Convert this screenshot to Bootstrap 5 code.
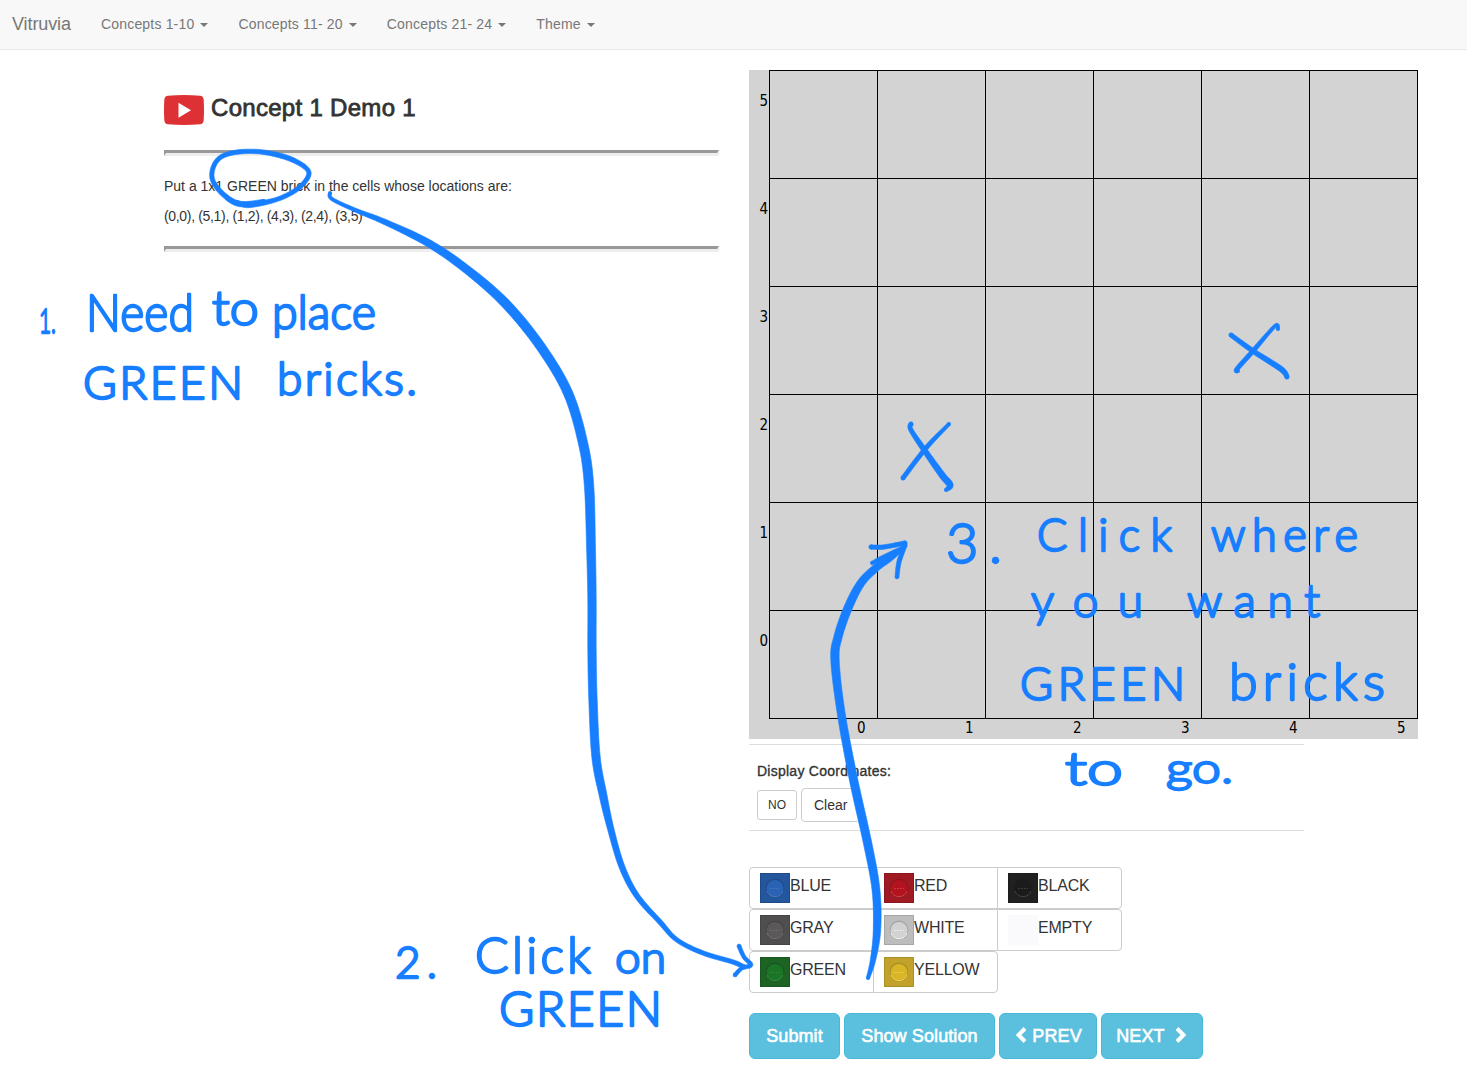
<!DOCTYPE html>
<html lang="en">
<head>
<meta charset="utf-8">
<title>Vitruvia</title>
<meta name="viewport" content="width=device-width, initial-scale=1">
<link href="https://cdn.jsdelivr.net/npm/bootstrap@5.3.0/dist/css/bootstrap.min.css" rel="stylesheet">
<style>
body{font-family:"Liberation Sans",Arial,sans-serif;font-size:14px;line-height:20px;color:#333;min-height:1074px;overflow:hidden}
.topbar{height:50px;background:#f8f8f8;border-bottom:1px solid #e7e7e7;padding:0 0 0 12px}
.topbar .navbar-brand{font-size:18px;line-height:20px;color:#777;width:59px;margin:0 30px 0 0;padding:0 0 2px;letter-spacing:-.1px}
.topbar .navbar-nav{gap:30px}
.topbar .nav-link{color:#777;padding:0 0 2px!important;line-height:20px;white-space:nowrap;letter-spacing:.18px}
.topbar .nav-link::after{border-width:4px 4px 0;margin-left:6px;vertical-align:2px}
.lesson{width:555px;margin-left:164px;padding-top:42px}
.lesson h3{font-size:24px;line-height:30px;margin:1px 0 0;-webkit-text-stroke:.8px #333;font-weight:400;letter-spacing:.3px}
.playicon{margin-right:7px}
.rule{height:6px;border:solid;border-width:3px 2px 3px 2px;border-color:#999 #eee #eee #999;opacity:1;margin:0}
.rule-top{margin-top:24px}
.rule-end{margin-top:20px}
.task{margin:20px 0 0}
.spots{margin:10px 0 0;letter-spacing:-.33px}
.work{width:669px;margin-left:30px;padding-top:20px}
.board{background:#d3d3d3;height:669px;display:grid;grid-template-columns:20px 649px;grid-template-rows:649px 20px;color:#000;font-family:"DejaVu Sans Condensed","DejaVu Sans",sans-serif;font-size:15px}
.cells{display:grid;grid-template-columns:repeat(6,108px);grid-template-rows:repeat(6,108px);border:solid #000;border-width:1px 0 0 1px}
.cells i{border:solid #000;border-width:0 1px 1px 0}
.ylab span{height:108px;padding-top:21px;text-align:right;padding-right:1px}
.xlab span{width:108px;padding-left:88px;line-height:19px}
.coords{width:555px;border:solid #ddd;border-width:1px 0;margin-top:5px;height:87px;padding:16px 8px 0}
.coords .lbl{-webkit-text-stroke:.35px #333;letter-spacing:.25px}
.coords .pair{gap:4px;margin-top:7px}
.btn-plain{background:#fff;border:1px solid #ccc;color:#333;font-size:14px;line-height:20px;padding:6px 12px;border-radius:4px}
.btn-plain.tiny{font-size:12px;line-height:18px;padding:5px 0;width:40px;border-radius:3px}
.bricks{margin-top:36px}
.bricks .btn{width:125px;height:42px;background:#fff;border:1px solid #ccc;color:#333;font-size:16px;line-height:22px;padding:5px 10px;border-radius:4px;text-align:left;display:flex;align-items:flex-start;letter-spacing:-.2px}
.bricks .btn + .btn{margin-left:-1px}
.bricks .btn:not(:last-child){border-top-right-radius:0;border-bottom-right-radius:0}
.bricks .btn:not(:first-child){border-top-left-radius:0;border-bottom-left-radius:0}
.bricks .btn span{margin-top:2px}
.actions{margin-top:20px;gap:4px}
.actions .btn{height:46px;background:#5bc0de;border:1px solid #46b8da;color:#fff;font-size:18px;line-height:24px;border-radius:6px;padding:10px 0;-webkit-text-stroke:.6px #fff;letter-spacing:.1px;white-space:nowrap}
.actions svg{vertical-align:-2px}
.w91{width:91px}.w151{width:151px}.w98{width:98px}.w102{width:102px}
.ink{position:absolute;left:0;top:0;pointer-events:none}
.ink text{font-family:Lato,"Open Sans",sans-serif;font-weight:300;fill:#177fff;stroke:#177fff;stroke-width:2.3px;stroke-linejoin:round}
</style>
<script src="https://cdn.jsdelivr.net/npm/bootstrap@5.3.0/dist/js/bootstrap.bundle.min.js"></script>
</head>
<body class="position-relative bg-white">
<nav class="topbar navbar navbar-expand d-flex align-items-center justify-content-start">
  <a class="navbar-brand" href="#">Vitruvia</a>
  <div class="navbar-nav">
    <a class="nav-link dropdown-toggle" href="#">Concepts 1-10</a>
    <a class="nav-link dropdown-toggle" href="#">Concepts 11- 20</a>
    <a class="nav-link dropdown-toggle" href="#">Concepts 21- 24</a>
    <a class="nav-link dropdown-toggle" href="#">Theme</a>
  </div>
</nav>
<main class="d-flex">
  <section class="lesson flex-shrink-0">
    <div class="d-flex">
      <svg class="playicon flex-shrink-0" width="40" height="34" viewBox="0 0 40 34"><path d="M4 3.800Q20 2.400 36 3.800Q39.500 4 39.700 8Q40.300 18 39.700 28Q39.500 32 36 32.300Q20 33.700 4 32.300Q.5 32 .3 28Q-.3 18 .3 8Q.5 4 4 3.800z" fill="#dd3135"/><path d="M14.500 10.800v15l12.500-7.500z" fill="#fff"/></svg>
      <h3>Concept 1 Demo 1</h3>
    </div>
    <hr class="rule rule-top">
    <p class="task">Put a 1x1 GREEN brick in the cells whose locations are:</p>
    <p class="spots">(0,0), (5,1), (1,2), (4,3), (2,4), (3,5)</p>
    <hr class="rule rule-end">
  </section>
  <section class="work flex-shrink-0">
    <div class="board">
      <div class="ylab d-flex flex-column"><span>5</span><span>4</span><span>3</span><span>2</span><span>1</span><span>0</span></div>
      <div class="cells" id="cells"></div>
      <div></div>
      <div class="xlab d-flex"><span>0</span><span>1</span><span>2</span><span>3</span><span>4</span><span>5</span></div>
    </div>
    <div class="coords">
      <div class="lbl">Display Coordinates:</div>
      <div class="pair d-flex align-items-center"><button class="btn btn-plain tiny">NO</button><button class="btn btn-plain">Clear</button></div>
    </div>
    <div class="bricks" id="bricks"></div>
    <div class="actions d-flex">
      <button class="btn w91">Submit</button>
      <button class="btn w151">Show Solution</button>
      <button class="btn w98"><svg width="13" height="18" viewBox="0 0 13 18"><path d="M11 2.500L4.500 9l6.500 6.500" fill="none" stroke="#fff" stroke-width="4"/></svg> PREV</button>
      <button class="btn w102">NEXT&nbsp; <svg width="13" height="18" viewBox="0 0 13 18"><path d="M2 2.500L8.500 9 2 15.500" fill="none" stroke="#fff" stroke-width="4"/></svg></button>
    </div>
  </section>
</main>
<svg class="ink" id="ink" width="1467" height="1074" viewBox="0 0 1467 1074"></svg>
<script>
document.getElementById('cells').innerHTML='<i></i>'.repeat(36);

// brick palette
const rows=[[['BLUE','#24569d','#2a63b4','#4579bd'],['RED','#a01a24','#b3121f','#c7444e'],['BLACK','#202020','#1b1b1b','#454545']],
[['GRAY','#504e4f','#5a5859','#757374'],['WHITE','#bdbdbd','#d2d2d2','#f3f3f3'],['EMPTY','#fafafc']],
[['GREEN','#1c6324','#1a7526','#3c8a46'],['YELLOW','#c3a22b','#d9b528','#edd061']]];
document.getElementById('bricks').innerHTML=rows.map(r=>'<div class="d-flex">'+r.map(([n,bg,stud,edge])=>
 `<button class="btn"><svg class="flex-shrink-0" width="30" height="30" viewBox="0 0 30 30"><rect width="30" height="30" fill="${bg}"/>`+
 (stud?`<rect x=".5" y=".5" width="29" height="29" fill="none" stroke="#000" stroke-opacity=".12"/><circle cx="15" cy="15" r="9.500" fill="#000" opacity=".12"/><circle cx="15" cy="15.500" r="8.500" fill="${stud}"/><path d="M7 18a8.500 8.500 0 0 0 16 0" fill="none" stroke="${edge}"/><path d="M10 15.500h10" stroke="${edge}" stroke-width=".8" stroke-dasharray="2 1"/>`:'')+
 `</svg><span>${n}</span></button>`).join('')+'</div>').join('');

// marker notes: text, x, baseline, width, font size, 1 = widen by spacing only
const notes=[['1.',39,333,17,34],['Need',86,331,108,51],['to',212,325,47,48],['place',272,329,104,47],['GREEN',83,399,160,46,1],['bricks.',277,395,140,46,1],
['2.',395,978,42,44,1],['Click',475,973,116,50,1],['on',615,973,51,44],['GREEN',499,1026,163,48,1],
['3.',946,563,56,56,1],['Click',1037,551,135,45,1],['where',1211,551,147,45,1],['you',1031,617,112,46,1],['want',1187,617,133,46,1],
['GREEN',1020,700,165,45,1],['bricks',1229,700,156,52,1],['to',1065,785,58,45],['go.',1166,783,67,42]];
// pen strokes: x, y, pen width
const strokes=[
[[330,193,4],[332,199,4],[355,210,4.5],[385,222,6],[430,244,8],[470,272,9],[507,305,10],[541,347,10],[568,393,10],[583,443,10],[589,485,10],[591,547,9.5],[592,600,9],[592,650,9],[593,700,9],[596,757,9],[603,795,8.5],[611,830,7],[622,867,6.5],[637,896,6],[660,922,5.5],[677,940,5],[703,953,5],[733,962,5],[744,967,5]],
[[739,946,4.500],[744,957,4.500],[751,965,4.500],[742,968,4.500],[735,975,4.500]],
[[868,978,4],[873,960,6],[877,930,8],[876,890,8.500],[868,845,9],[853,777,9],[841,712,8.5],[835,660,9],[838,637,9],[848,608,9],[861,583,8.5],[877,567,8],[890,558,7],[904,547,4]],
[[871,547,5],[884,547,5],[905,543,5]],[[905,545,5],[899,562,5],[897,577,4.500]],[[872,563,4],[884,557,5],[904,547,4]],
[[264,201,4],[240,204,6],[224,195,5.500],[213,181,5],[213,168,5],[221,157,5],[238,152,5],[262,152,5],[288,158,5.500],[306,168,5],[308,177,5],[296,190,5],[275,200,5],[248,205,6],[237,202,4]],
[[911,424,5],[911,430,5],[925,451,6],[942,475,7],[950,485,7],[946,490,4]],[[949,424,4],[926,448,5],[903,478,5]],
[[1231,335,5],[1253,351,5.500],[1281,369,6],[1287,377,5]],[[1278,329,4],[1275,326,4],[1253,351,5],[1237,369,5],[1238,371,4]]];
const mix=(a,b,c,d,t)=>.5*(2*b+(c-a)*t+(2*a-5*b+4*c-d)*t*t+(3*b-a-3*c+d)*t*t*t);
const f=n=>n.toFixed(2);
let out='';
for(const s of strokes){
  const pts=[];
  for(let i=0;i<s.length-1;i++){
    const q=[s[Math.max(0,i-1)],s[i],s[i+1],s[Math.min(s.length-1,i+2)]];
    for(let k=0;k<8;k++)pts.push([0,1,2].map(j=>mix(q[0][j],q[1][j],q[2][j],q[3][j],k/8)));
  }
  pts.push(s[s.length-1]);
  // ribbon outline: offset each centre point by half the pen width, then round the ends
  const left=[],right=[];
  pts.forEach((p,i)=>{
    const a=pts[Math.max(0,i-1)],b=pts[Math.min(pts.length-1,i+1)];
    const dx=b[0]-a[0],dy=b[1]-a[1],l=Math.hypot(dx,dy)||1,h=(p[2]-.6)/2;
    left.push(f(p[0]-dy/l*h)+' '+f(p[1]+dx/l*h));
    right.unshift(f(p[0]+dy/l*h)+' '+f(p[1]-dx/l*h));
  });
  out+=`<path d="M${left.concat(right).join('L')}z"/>`;
  for(const p of [pts[0],pts[pts.length-1]])out+=`<circle cx="${p[0]}" cy="${p[1]}" r="${(p[2]-.6)/2}"/>`;
}
document.getElementById('ink').innerHTML=`<g fill="#177fff" stroke="#177fff" stroke-width=".6" stroke-linejoin="round">${out}</g>`+
 notes.map(([t,x,y,w,s,sp])=>`<text x="${x}" y="${y}" font-size="${s}" textLength="${w}" lengthAdjust="${sp?'spacing':'spacingAndGlyphs'}">${t}</text>`).join('');
</script>
</body>
</html>
